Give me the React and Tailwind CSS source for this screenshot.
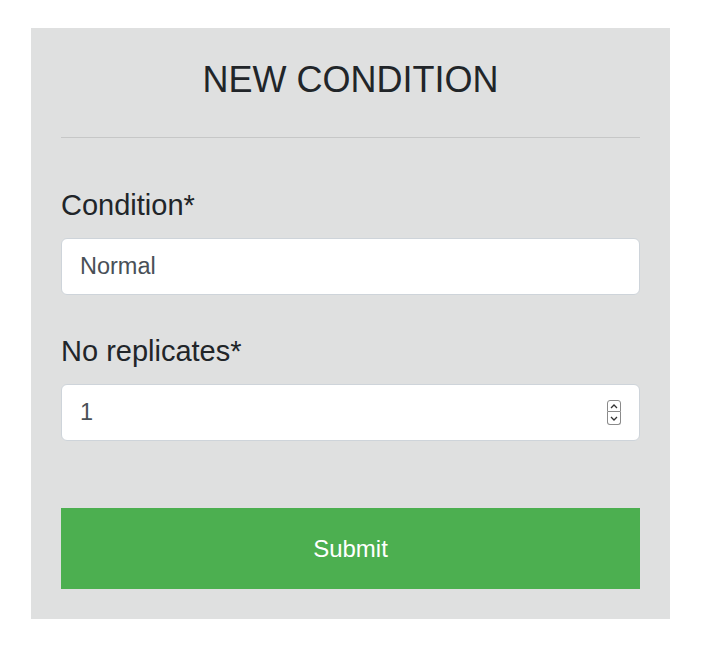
import React from "react";

export default function App() {
  return (
    <div className="min-h-[657px] bg-white" style={{ fontFamily: '"Liberation Sans", Arial, sans-serif' }}>
      <div className="pt-[28px] pl-[31px]">
        <div className="w-[639px] bg-[#dfe0e0] px-[30px] pt-[30px] pb-[30px]">
          <h1 className="text-center text-[36px] leading-[43px] text-[#212529] font-normal">NEW CONDITION</h1>
          <div className="mt-[36px] h-px bg-[#c6c7c7]" />
          <div className="mt-[50px] text-[29px] leading-[35px] text-[#212529]">Condition*</div>
          <div className="mt-[15px] h-[57px] rounded-[6px] border border-[#ced4da] bg-white flex items-center px-[18px] text-[23.5px] text-[#495057]">
            Normal
          </div>
          <div className="mt-[39px] text-[29px] leading-[35px] text-[#212529]">No replicates*</div>
          <div className="mt-[15px] h-[57px] rounded-[6px] border border-[#ced4da] bg-white flex items-center pl-[18px] pr-[18px] text-[23.5px] text-[#495057]">
            <span className="flex-1">1</span>
            <div className="flex flex-col">
              <div className="w-[14px] h-[12px] rounded-t-[3px] border border-[#8a8a8a] flex items-center justify-center">
                <svg width="8" height="5" viewBox="0 0 8 5"><path d="M1 4 L4 1 L7 4" fill="none" stroke="#333" strokeWidth="1.3" /></svg>
              </div>
              <div className="w-[14px] h-[13px] rounded-b-[3px] border border-t-0 border-[#8a8a8a] flex items-center justify-center">
                <svg width="8" height="5" viewBox="0 0 8 5"><path d="M1 1 L4 4 L7 1" fill="none" stroke="#333" strokeWidth="1.3" /></svg>
              </div>
            </div>
          </div>
          <button className="mt-[67px] w-full h-[81px] bg-[#4caf50] text-white text-[24px] flex items-center justify-center">
            Submit
          </button>
        </div>
      </div>
    </div>
  );
}
